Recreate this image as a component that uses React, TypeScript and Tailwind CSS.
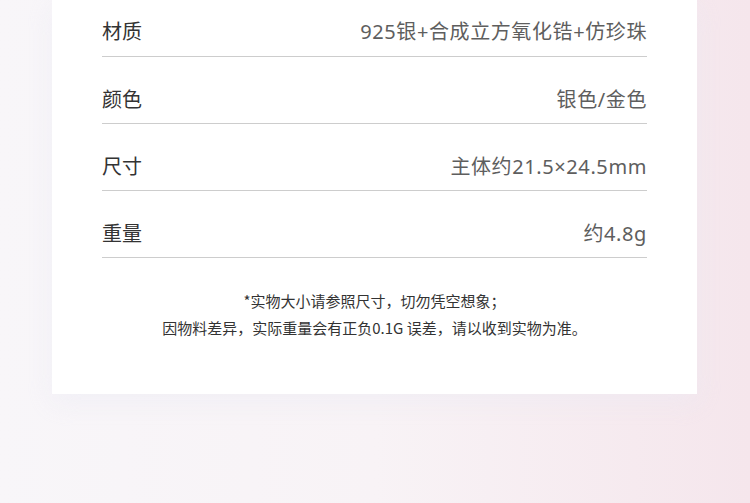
const specs = [
  { label: "材质", value: "925银+合成立方氧化锆+仿珍珠" },
  { label: "颜色", value: "银色/金色" },
  { label: "尺寸", value: "主体约21.5×24.5mm" },
  { label: "重量", value: "约4.8g" },
];

export default function App() {
  return (
    <div className="h-[503px] w-[750px] overflow-hidden bg-linear-to-r from-[#f8f6f9] via-[#f8f3f6] to-[#f5e6ec] font-['Noto_Sans','Noto_Sans_CJK_SC',sans-serif]">
      <div className="ml-[52px] h-[394px] w-[645px] bg-white px-[50px] shadow-[0_8px_24px_rgba(232,232,244,0.45)]">
        <div className="flex flex-col">
          {specs.map((s, i) => (
            <div
              key={s.label}
              className={
                i === 0
                  ? "flex h-[57px] items-center justify-between border-b border-[#cdcdcd] pt-[8px]"
                  : "flex h-[67px] items-center justify-between border-b border-[#cdcdcd] pt-[19px]"
              }
            >
              <span className="text-[20px] leading-none text-[#333]">{s.label}</span>
              <span className="font-['Noto_Sans','Noto_Sans_CJK_SC',sans-serif] text-[20px] leading-none tracking-[0.6px] text-[#5e5e5e]">
                {s.value}
              </span>
            </div>
          ))}
        </div>
        <div className="mt-[29px] text-center font-['Noto_Sans_CJK_SC',sans-serif] text-[15px] leading-[27px] text-[#333]">
          <p>*实物大小请参照尺寸，切勿凭空想象；</p>
          <p>因物料差异，实际重量会有正负0.1G 误差，请以收到实物为准。</p>
        </div>
      </div>
    </div>
  );
}
